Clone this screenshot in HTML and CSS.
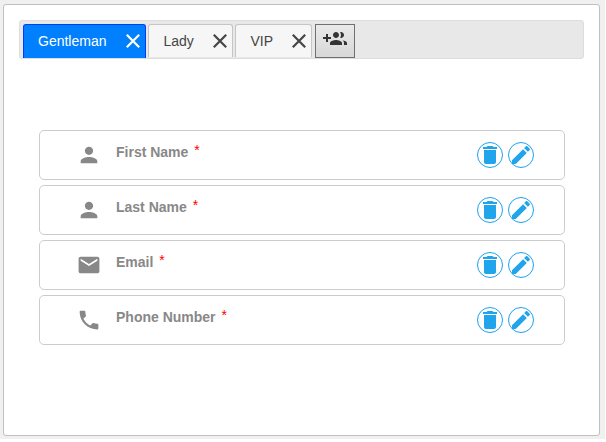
FILE: index.html
```html
<!DOCTYPE html>
<html lang="en">
<head>
<meta charset="utf-8">
<title>Guest form</title>
<link rel="stylesheet" href="styles.css">
</head>
<body>
<svg class="defs" aria-hidden="true">
  <symbol id="close" viewBox="0 0 14 14"><path d="M.8.8l12.4 12.4M13.2.8L.8 13.2" fill="none" stroke="currentColor" stroke-width="2.2"/></symbol>
  <symbol id="group-add" viewBox="0 0 24 24"><path d="M8 10H5V7H3v3H0v2h3v3h2v-3h3v-2zm10 1c1.66 0 2.99-1.34 2.99-3S19.66 5 18 5c-.32 0-.63.05-.91.14.57.81.9 1.79.9 2.86s-.34 2.04-.9 2.86c.28.09.59.14.91.14zm-5 0c1.66 0 2.99-1.34 2.99-3S14.66 5 13 5c-1.66 0-3 1.34-3 3s1.34 3 3 3zm6.620 2.160c.83.73 1.380 1.660 1.380 2.840v2h3v-2c0-1.540-2.370-2.490-4.380-2.840zM13 13c-2 0-6 1-6 3v2h12v-2c0-2-4-3-6-3z"/></symbol>
  <symbol id="person" viewBox="0 0 24 24"><path d="M12 12c2.210 0 4-1.790 4-4s-1.790-4-4-4-4 1.790-4 4 1.790 4 4 4zm0 2c-2.670 0-8 1.340-8 4v2h16v-2c0-2.660-5.330-4-8-4z"/></symbol>
  <symbol id="email" viewBox="0 0 24 24"><path d="M20 4H4c-1.100 0-1.990.9-1.990 2L2 18c0 1.100.9 2 2 2h16c1.100 0 2-.9 2-2V6c0-1.100-.9-2-2-2zm0 4l-8 5-8-5V6l8 5 8-5v2z"/></symbol>
  <symbol id="phone" viewBox="0 0 24 24"><path d="M6.620 10.790c1.440 2.830 3.760 5.140 6.590 6.590l2.200-2.200c.27-.27.67-.36 1.020-.24 1.120.37 2.330.57 3.570.57.55 0 1 .45 1 1V20c0 .55-.45 1-1 1-9.390 0-17-7.610-17-17 0-.55.45-1 1-1h3.500c.55 0 1 .45 1 1 0 1.250.2 2.450.57 3.570.11.35.03.74-.25 1.020l-2.200 2.200z"/></symbol>
  <symbol id="trash" viewBox="0 0 24 24"><path d="M6 19c0 1.100.9 2 2 2h8c1.100 0 2-.9 2-2V7H6v12zM19 4h-3.500l-1-1h-5l-1 1H5v2h14V4z"/></symbol>
  <symbol id="edit" viewBox="0 0 24 24"><path d="M3 17.250V21h3.750L17.810 9.940l-3.750-3.750L3 17.250zM20.710 7.040c.39-.39.39-1.020 0-1.410l-2.340-2.340c-.39-.39-1.020-.39-1.410 0l-1.830 1.830 3.750 3.750 1.830-1.830z"/></symbol>
</svg>
<main class="panel">
  <nav class="tabs">
    <div class="tab tab-active"><span>Gentleman</span><svg class="close"><use href="#close"/></svg></div>
    <div class="tab"><span>Lady</span><svg class="close"><use href="#close"/></svg></div>
    <div class="tab"><span>VIP</span><svg class="close"><use href="#close"/></svg></div>
    <button class="add" aria-label="Add group"><svg><use href="#group-add"/></svg></button>
  </nav>
  <section class="fields">
    <div class="field">
      <svg class="kind"><use href="#person" width="25" height="25"/></svg>
      <div class="label">First Name<span class="required">*</span></div>
      <div class="action"><svg><use href="#trash"/></svg></div>
      <div class="action"><svg><use href="#edit"/></svg></div>
    </div>
    <div class="field">
      <svg class="kind"><use href="#person" width="25" height="25"/></svg>
      <div class="label">Last Name<span class="required">*</span></div>
      <div class="action"><svg><use href="#trash"/></svg></div>
      <div class="action"><svg><use href="#edit"/></svg></div>
    </div>
    <div class="field">
      <svg class="kind"><use href="#email" width="25" height="25"/></svg>
      <div class="label">Email<span class="required">*</span></div>
      <div class="action"><svg><use href="#trash"/></svg></div>
      <div class="action"><svg><use href="#edit"/></svg></div>
    </div>
    <div class="field">
      <svg class="kind"><use href="#phone" width="25" height="25"/></svg>
      <div class="label">Phone Number<span class="required">*</span></div>
      <div class="action"><svg><use href="#trash"/></svg></div>
      <div class="action"><svg><use href="#edit"/></svg></div>
    </div>
  </section>
</main>
</body>
</html>
```
FILE: styles.css
```css
* { box-sizing: border-box; }

html { background: #fff; }

body {
  width: 605px;
  height: 439px;
  margin: 0;
  padding: 4px 5px 3px 3px;
  background: #f0f0f0;
  font: 14px/18px "Liberation Sans", Arial, sans-serif;
}

.defs { display: none; }

svg { display: block; fill: currentColor; }

.panel {
  width: 597px;
  height: 432px;
  padding: 15px;
  border: 1px solid #c0c0c0;
  border-radius: 3px;
  background: #fff;
}

.tabs {
  display: flex;
  align-items: flex-start;
  gap: 2px;
  height: 39px;
  padding: 3px;
  border: 1px solid #ddd;
  border-radius: 3px;
  background: #e8e8e8;
}

.tab {
  display: flex;
  align-items: center;
  justify-content: space-between;
  height: 33px;
  padding: 0 5px 0 14.500px;
  border: 1px solid #c5c5c5;
  border-bottom: 0;
  border-radius: 3px 3px 0 0;
  background: #f6f6f6;
  color: #454545;
}

.tab:nth-child(1) { width: 123px; }
.tab:nth-child(2) { width: 85px; }
.tab:nth-child(3) { width: 77px; }

.tab-active {
  height: 34px;
  padding: 0 5px 1px 14px;
  border-color: #003eff;
  background: #007fff;
  color: #fff;
}

.close { width: 14px; height: 14px; }

.add {
  width: 40px;
  height: 34px;
  margin-left: 1px;
  padding: 2px 0 0 7px;
  border: 1px solid #707070;
  background: linear-gradient(#e9e9e9, #d7d7d7);
  color: #333;
}

.add svg { width: 24px; height: 24px; margin-top: -6px; }

.fields {
  display: grid;
  gap: 5px;
  margin: 71px 19px 0 20px;
}

.field {
  display: flex;
  align-items: center;
  height: 50px;
  padding: 0 30px 0 36px;
  border: 1px solid #ccc;
  border-radius: 5px;
  background: #fff;
}

.kind { width: 26px; height: 26px; padding: .5px; color: #888; }

.label {
  flex: 1;
  margin: 0 0 6px 14px;
  color: #888;
  font-weight: bold;
}

.required {
  margin-left: 6px;
  color: #f00;
  font-weight: normal;
  line-height: 0;
  vertical-align: 2px;
}

.action {
  display: grid;
  place-items: center;
  width: 26px;
  height: 26px;
  margin-left: 5px;
  border: 1px solid #1da1f2;
  border-radius: 50%;
  color: #20a4eb;
}

.action svg { width: 24px; height: 24px; }
```
